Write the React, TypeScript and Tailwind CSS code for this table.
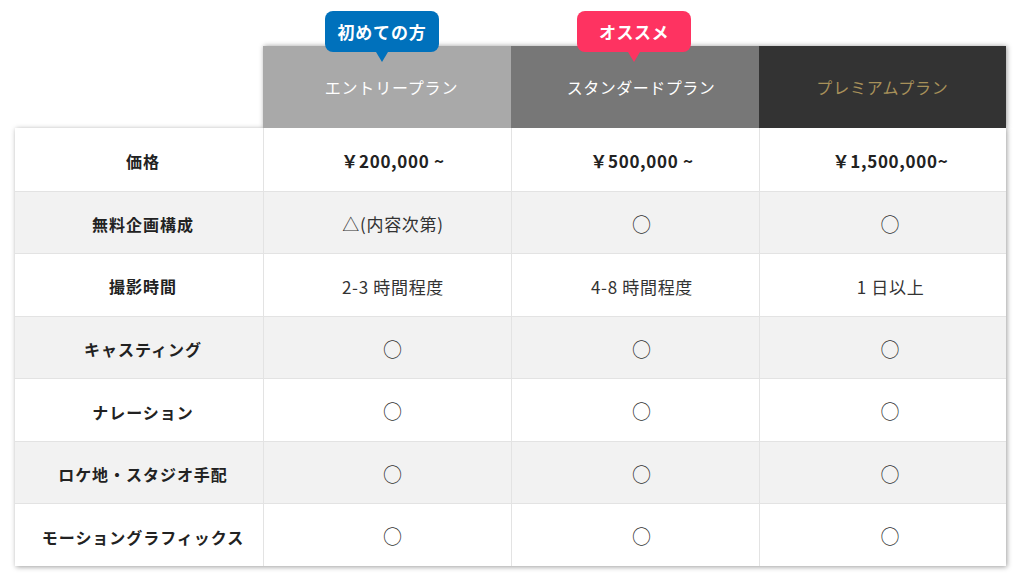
import React from "react";

const rows: { label: string; cells: string[]; bold?: boolean }[] = [
  { label: "価格", cells: ["￥200,000 ~", "￥500,000 ~", "￥1,500,000~"], bold: true },
  { label: "無料企画構成", cells: ["△(内容次第)", "○", "○"] },
  { label: "撮影時間", cells: ["2-3 時間程度", "4-8 時間程度", "1 日以上"] },
  { label: "キャスティング", cells: ["○", "○", "○"] },
  { label: "ナレーション", cells: ["○", "○", "○"] },
  { label: "ロケ地・スタジオ手配", cells: ["○", "○", "○"] },
  { label: "モーショングラフィックス", cells: ["○", "○", "○"] },
];

const cellPad = ["pl-[11px]", "pl-[13px]", "pl-[15px]"];

export default function App() {
  return (
    <div
      className="w-[1024px] h-[581px] bg-white overflow-hidden pt-[46px] pl-[15px]"
      style={{ fontFamily: '"Noto Sans CJK JP", "Noto Sans", sans-serif' }}
    >
      {/* header */}
      <div className="flex">
        <div className="w-[248px] shrink-0" />
        <div className="flex shadow-[1px_0_5px_rgba(0,0,0,0.38)]">
          <div className="relative w-[248px] h-[82px] bg-[#a9a9a9] flex items-center justify-center pl-[9px] text-white text-[16px] tracking-[0.05em]">
            <div className="absolute left-[62px] top-[-35px] w-[114px] h-[41px] rounded-[8px] bg-[#0071bc] flex items-center justify-center text-white font-bold text-[17px] tracking-[0.05em]">
              初めての方
              <div className="absolute left-1/2 -translate-x-1/2 top-[41px] w-0 h-0 border-l-[6px] border-r-[6px] border-t-[10px] border-l-transparent border-r-transparent border-t-[#0071bc]" />
            </div>
            エントリープラン
          </div>
          <div className="relative w-[248px] h-[82px] bg-[#777777] flex items-center justify-center pl-[12px] text-white text-[16px] tracking-[0.03em]">
            <div className="absolute left-[66px] top-[-35px] w-[114px] h-[41px] rounded-[8px] bg-[#fe3361] flex items-center justify-center text-white font-bold text-[17px]">
              オススメ
              <div className="absolute left-1/2 -translate-x-1/2 top-[41px] w-0 h-0 border-l-[6px] border-r-[6px] border-t-[10px] border-l-transparent border-r-transparent border-t-[#fe3361]" />
            </div>
            スタンダードプラン
          </div>
          <div className="relative w-[247px] h-[82px] bg-[#333333] flex items-center justify-center text-[#a8915a] text-[16px] tracking-[0.05em]">
            プレミアムプラン
          </div>
        </div>
      </div>
      {/* body */}
      <div className="w-[991px] shadow-[1px_1px_5px_rgba(0,0,0,0.38)] grid grid-rows-7 h-[438px]">
        {rows.map((r, i) => (
          <div
            key={r.label}
            className={`grid grid-cols-[248px_248px_248px_247px] ${i % 2 === 1 ? "bg-[#f2f2f2]" : "bg-white"} ${i > 0 ? "border-t border-[#e3e3e3]" : ""}`}
          >
            <div className="flex items-center justify-center pl-[8px] pt-[3px] font-bold text-[16px] tracking-[0.06em] text-[#222]">
              {r.label}
            </div>
            {r.cells.map((c, j) => (
              <div
                key={j}
                className={`flex items-center justify-center border-l border-[#e3e3e3] pt-[3px] tracking-[0.04em] ${cellPad[j]} ${r.bold ? "font-bold text-[#222]" : "text-[#333]"} ${c === "○" ? "text-[19px]" : "text-[17px]"}`}
              >
                {c}
              </div>
            ))}
          </div>
        ))}
      </div>
    </div>
  );
}
